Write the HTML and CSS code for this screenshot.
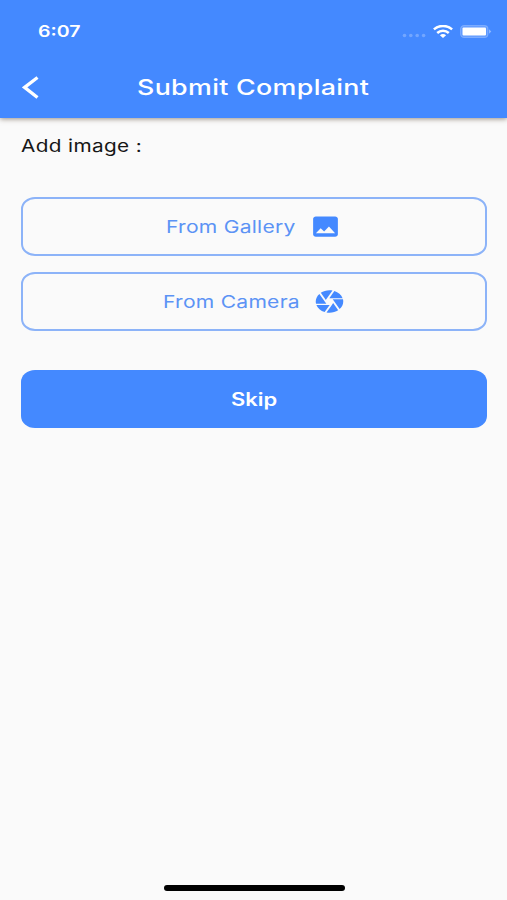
FILE: index.html
```html
<!DOCTYPE html>
<html lang="en">
<head>
<meta charset="utf-8">
<title>Submit Complaint</title>
<link rel="stylesheet" href="styles.css">
</head>
<body>
<div class="screen">
  <header class="header">
    <div class="status">
      <span class="wide time">6:07</span>
      <div class="indicators">
        <svg class="dots" viewBox="0 0 24 5" fill="#fff" fill-opacity=".25"><circle cx="2.5" cy="2.5" r="1.8"/><circle cx="8.8" cy="2.5" r="1.8"/><circle cx="15.2" cy="2.5" r="1.8"/><circle cx="21.6" cy="2.5" r="1.8"/></svg>
        <svg class="wifi" viewBox="0 0 20 13" fill="none" stroke="#fff" stroke-width="2.5"><path d="M.9 4.400C6-.2 14-.2 19.100 4.400"/><path d="M4.200 8C7.500 5 12.500 5 15.800 8"/><path d="M10 12.900L6.900 10.300C8.700 8.700 11.300 8.700 13.100 10.300Z" fill="#fff" stroke="none"/></svg>
        <svg class="battery" viewBox="0 0 32 13"><rect x=".6" y=".6" width="27.300" height="11.800" rx="3.500" fill="#fff" fill-opacity=".14" stroke="#fff" stroke-opacity=".25" stroke-width="1.100"/><rect x="2.500" y="2.400" width="23.500" height="8.200" rx="1" fill="#fff"/><path d="M29 4.300L31.300 6.500L29 8.700Z" fill="#fff" fill-opacity=".4"/></svg>
      </div>
    </div>
    <nav class="nav">
      <svg class="back" viewBox="0 0 18 23" fill="none" stroke="#fff" stroke-width="3.300"><path d="M15.500 1.500L2.600 11.400L15.500 21.500"/></svg>
      <h1 class="wide title">Submit Complaint</h1>
    </nav>
  </header>
  <main class="content">
    <p class="wide label">Add image :</p>
    <button class="button outline">
      <span class="wide gallery">From Gallery</span>
      <svg class="icon" viewBox="0 0 24 24" preserveAspectRatio="none"><path d="M21 19V5c0-1.100-.9-2-2-2H5c-1.100 0-2 .9-2 2v14c0 1.100.9 2 2 2h14c1.100 0 2-.9 2-2zM8.500 13.500l2.500 3.010L14.500 12l4.500 6H5l3.500-4.500z"/></svg>
    </button>
    <button class="button outline">
      <span class="wide camera">From Camera</span>
      <svg class="icon" viewBox="0 0 24 24" preserveAspectRatio="none"><path d="M9.400 10.500l4.770-8.260C13.470 2.090 12.750 2 12 2c-2.400 0-4.600.85-6.320 2.250l3.660 6.350.06-.1zM21.540 9c-.92-2.920-3.150-5.260-6-6.340L11.880 9h9.660zm.26 1h-7.490l.29.5 4.760 8.250C21 16.970 22 14.610 22 12c0-.69-.07-1.350-.2-2zM8.540 12l-3.900-6.750C3.010 7.030 2 9.390 2 12c0 .69.07 1.350.2 2h7.490l-1.150-2zm-6.080 3c.92 2.920 3.150 5.260 6 6.340L12.120 15H2.460zm11.270 0l-3.900 6.760c.7.15 1.420.24 2.170.24 2.400 0 4.600-.85 6.320-2.250l-3.660-6.350-.93 1.600z"/></svg>
    </button>
    <button class="button filled"><span class="wide skip">Skip</span></button>
  </main>
  <div class="home"></div>
</div>
</body>
</html>
```
FILE: styles.css
```css
* { box-sizing: border-box; }
body { margin: 0; background: #fafafa; font-family: Inter, "Liberation Sans", sans-serif; }
.screen { width: 507px; height: 900px; display: flex; flex-direction: column; background: #fafafa; overflow: hidden; }
.wide { display: block; white-space: nowrap; text-align: left; transform: scaleX(1.22); transform-origin: 0 50%; }
.header { height: 118px; flex: none; background: #4489ff; color: #fff; box-shadow: 0 1px 5px rgba(60, 40, 20, .5); }
.status { height: 62px; display: flex; align-items: center; justify-content: space-between; padding: 0 15px 0 38px; }
.time { font-size: 16px; line-height: 20px; font-weight: 600; }
.indicators { display: flex; align-items: center; }
.dots { width: 24px; height: 5px; margin: 9px 7px 0 0; }
.wifi { width: 20px; height: 13px; margin-right: 7px; }
.battery { width: 32px; height: 13px; }
.nav { height: 50px; display: flex; align-items: center; padding-left: 22px; }
.back { width: 18px; height: 23px; margin-right: 97px; }
.title { margin: 0; font-size: 22px; line-height: 28px; font-weight: 500; letter-spacing: .25px; }
.content { flex: 1; display: flex; flex-direction: column; padding: 16px 20px 0 21px; }
.label { margin: 0 0 39px; font-size: 17px; line-height: 24px; letter-spacing: .3px; color: #161616; }
.button { height: 59px; flex: none; display: flex; align-items: center; padding: 0; border-radius: 14px / 12px; font-family: inherit; }
.outline { background: transparent; border: 2px solid #8cb3f8; color: #5c93f5; margin-bottom: 16px; }
.gallery, .camera { flex: none; font-size: 17.300px; line-height: 24px; letter-spacing: .2px; }
.gallery { width: 143px; margin-left: 143px; }
.camera { width: 149.500px; margin-left: 140px; }
.icon { width: 33px; height: 27px; fill: #4489ff; }
.filled { height: 58px; margin-top: 23px; border: 0; background: #4489ff; color: #fff; }
.skip { margin: 2px 0 0 209.500px; font-size: 18px; line-height: 24px; font-weight: 600; }
.home { width: 181px; height: 6px; margin: 0 0 9px 164px; border-radius: 3px; background: #000; }
```
